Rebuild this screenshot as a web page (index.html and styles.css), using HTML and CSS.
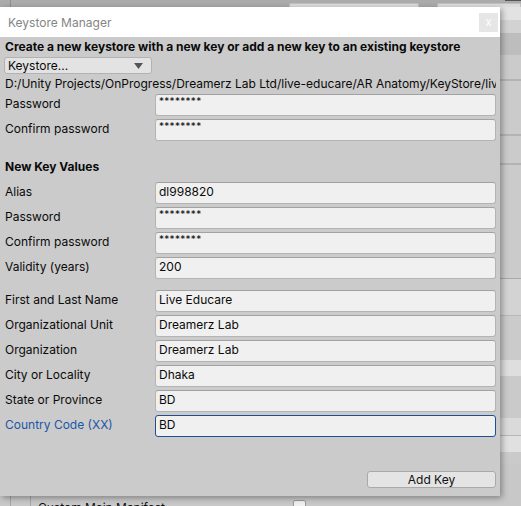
FILE: index.html
```html
<!DOCTYPE html>
<html>
<head>
<meta charset="utf-8">
<link rel="stylesheet" href="styles.css">
</head>
<body>
<div class="bg">
  <div class="topbar">
    <span class="tb-line"></span>
    <span class="tab tab1"></span>
    <span class="tab tab2"></span>
    <span class="tb-dark"></span>
  </div>
  <div class="rows">
    <div class="r r1"></div>
    <div class="r r2"></div>
    <div class="r r3"></div>
    <div class="r r4"></div>
    <div class="r r5"></div>
    <div class="r r6"></div>
    <div class="r r7"></div>
    <div class="r r8"></div>
    <div class="r r9"></div>
    <div class="r r10"></div>
    <div class="r r11"></div>
    <div class="r r12"></div>
    <div class="r r13"></div>
    <div class="r r14"></div>
  </div>
  <div class="manifest">
    <span class="vl vl1"></span>
    <span class="vl vl2"></span>
    <span class="mtext">Custom Main Manifest</span>
    <span class="mcheck"></span>
  </div>
</div>

<div class="dialog">
  <div class="titlebar">
    <span class="title">Keystore Manager</span>
    <span class="close">x</span>
  </div>
  <div class="content">
    <div class="heading">Create a new keystore with a new key or add a new key to an existing keystore</div>
    <div class="dropdown"><span>Keystore...</span><svg class="arrow" width="9" height="6" viewBox="0 0 9 6"><path d="M0 0H9L4.5 6Z" fill="#555"/></svg></div>
    <div class="path">D:/Unity Projects/OnProgress/Dreamerz Lab Ltd/live-educare/AR Anatomy/KeyStore/live</div>
    <div class="row"><label>Password</label><div class="field pw">********</div></div>
    <div class="row"><label>Confirm password</label><div class="field pw">********</div></div>

    <div class="section">New Key Values</div>
    <div class="row"><label>Alias</label><div class="field">dl998820</div></div>
    <div class="row"><label>Password</label><div class="field pw">********</div></div>
    <div class="row"><label>Confirm password</label><div class="field pw">********</div></div>
    <div class="row"><label>Validity (years)</label><div class="field">200</div></div>

    <div class="group">
      <div class="row"><label>First and Last Name</label><div class="field">Live Educare</div></div>
      <div class="row"><label>Organizational Unit</label><div class="field">Dreamerz Lab</div></div>
      <div class="row"><label>Organization</label><div class="field">Dreamerz Lab</div></div>
      <div class="row"><label>City or Locality</label><div class="field">Dhaka</div></div>
      <div class="row"><label>State or Province</label><div class="field">BD</div></div>
      <div class="row focus"><label>Country Code (XX)</label><div class="field">BD</div></div>
    </div>

    <div class="actions"><button class="btn">Add Key</button></div>
  </div>
</div>
</body>
</html>
```

FILE: styles.css
```css
* { box-sizing: border-box; }
html, body { margin: 0; padding: 0; }
body {
  width: 521px;
  height: 506px;
  overflow: hidden;
  position: relative;
  background: #c8c8c8;
  font-family: Inter, "Noto Sans", sans-serif;
  font-size: 12px;
  color: #0a0a0a;
}

/* background editor */
.bg { display: flex; flex-direction: column; height: 506px; }
.topbar {
  height: 7px;
  background: #ababab;
  position: relative;
  flex: none;
}
.tb-line { position: absolute; left: 10px; top: 0; width: 1px; height: 7px; background: #8e8e8e; }
.tab { position: absolute; top: 3px; height: 4px; background: #dcdcdc; border: 1px solid #c0c0c0; border-bottom: none; border-radius: 2px 2px 0 0; }
.tab1 { left: 289px; width: 130px; }
.tab2 { left: 437px; width: 84px; }
.tb-dark { position: absolute; right: 0; top: 0; width: 16px; height: 1px; background: #555; }

.rows { display: flex; flex-direction: column; flex: none; }
.r { flex: none; }
.r1 { height: 13px; background: #e2e2e2; }
.r2 { height: 13px; background: #d2d2d2; }
.r3 { height: 22px; background: #bdbdbd; }
.r4 { height: 26px; background: #cbcbcb; border-bottom: 2px solid #b3b3b3; }
.r5 { height: 55px; background: #cbcbcb; border-bottom: 2px solid #b3b3b3; }
.r6 { height: 29px; background: #cbcbcb; border-bottom: 2px solid #b3b3b3; }
.r7 { height: 114px; background: #cbcbcb; border-bottom: 1px solid #a9a9a9; }
.r8 { height: 37px; background: #d3d3d3; border-bottom: 1px solid #b9b9b9; }
.r9 { height: 44px; background: #cbcbcb; }
.r10 { height: 16px; background: #dedede; }
.r11 { height: 42px; background: #cacaca; }
.r12 { height: 18px; background: #dadada; border-bottom: 1px solid #b7b7b7; }
.r13 { height: 16px; background: #e0e0e0; }
.r14 { height: 12px; background: #cacaca; }

.manifest {
  position: relative;
  flex: 1;
  background: #c8c8c8;
}
.vl { position: absolute; top: 0; bottom: 0; width: 1px; background: #a5a5a5; }
.vl1 { left: 10px; }
.vl2 { left: 30px; }
.mtext { position: absolute; left: 38px; top: 37px; font-size: 12px; color: #111; line-height: 14px; white-space: nowrap; }
.mcheck { position: absolute; left: 293px; top: 36px; width: 13px; height: 13px; background: #f0f0f0; border: 1px solid #999; border-radius: 2px; }

/* dialog window */
.dialog {
  position: absolute;
  left: 0;
  top: 7px;
  width: 500px;
  height: 489px;
  background: #cbcbcb;
  box-shadow: 2px 2px 6px rgba(0,0,0,0.35);
  display: flex;
  flex-direction: column;
}
.titlebar {
  height: 30px;
  background: #ffffff;
  display: flex;
  align-items: center;
  justify-content: space-between;
  padding: 0 2px 0 8px;
  flex: none;
}
.title { color: #858585; font-size: 12px; }
.close {
  width: 19px;
  height: 19px;
  background: #e6e6e6;
  color: #ffffff;
  font-size: 11px;
  display: flex;
  align-items: center;
  justify-content: center;
  line-height: 1;
}

.content {
  flex: 1;
  display: flex;
  flex-direction: column;
  padding: 1px 4px 0 4px;
}
.heading {
  font-weight: 700;
  height: 17px;
  line-height: 17px;
  padding-left: 1px;
  white-space: nowrap;
}
.dropdown {
  margin-top: 2px;
  width: 148px;
  height: 17px;
  background: #e3e3e3;
  border: 1px solid #b2b2b2;
  border-radius: 3px;
  display: flex;
  align-items: center;
  justify-content: space-between;
  padding: 0 8px 0 3px;
  line-height: 15px;
}
.arrow { display: block; }
.path {
  height: 18px;
  line-height: 18px;
  margin-top: 1px;
  padding-left: 1px;
  white-space: nowrap;
  overflow: hidden;
}
.row {
  display: flex;
  align-items: center;
  height: 22px;
  margin-top: 3px;
}
.path + .row { margin-top: 1px; }
.row label {
  width: 151px;
  flex: none;
  padding-left: 1px;
  margin-top: -3px;
}
.field {
  flex: 1;
  height: 22px;
  background: #f0f0f0;
  border: 1px solid #b4b4b4;
  border-top-color: #a2a2a2;
  border-radius: 3px;
  padding: 0 3px;
  line-height: 18px;
  white-space: nowrap;
}
.field.pw { font-size: 10px; line-height: 12px; letter-spacing: 0.3px; }
.section {
  font-weight: 700;
  margin-top: 14px;
  height: 24px;
  line-height: 24px;
  padding-left: 1px;
}
.group { margin-top: 11px; display: flex; flex-direction: column; }
.group .row:first-child { margin-top: 0; }
.focus label { color: #1d56a8; }
.focus .field { border-color: #1d4f94; }
.actions {
  display: flex;
  justify-content: flex-end;
  margin-top: 34px;
}
.btn {
  width: 129px;
  height: 17px;
  background: #e4e4e4;
  border: 1px solid #a9a9a9;
  border-radius: 3px;
  font-family: Inter, "Noto Sans", sans-serif;
  font-size: 12px;
  color: #111;
  padding: 0;
  line-height: 15px;
}
```
